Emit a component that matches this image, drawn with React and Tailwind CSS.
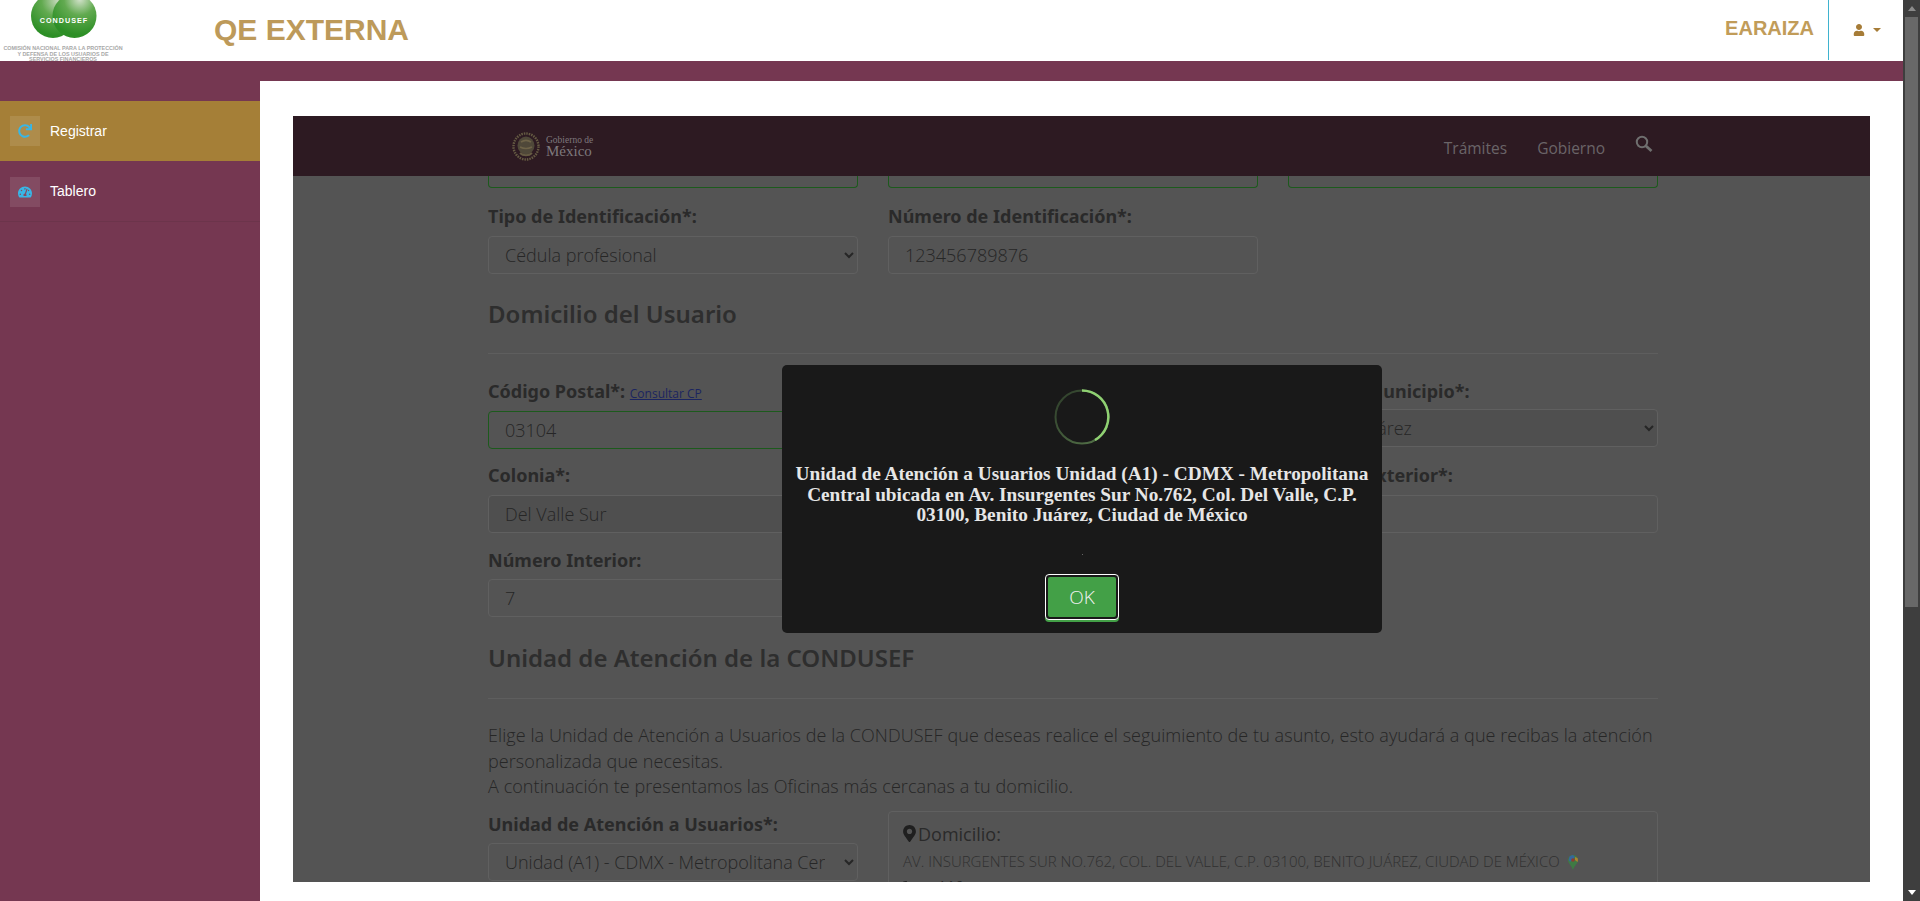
import React from 'react';
import { FaRedo, FaTachometerAlt, FaUser, FaMapMarkerAlt, FaPhoneAlt } from 'react-icons/fa';

const LABEL = "block font-['Noto_Sans',sans-serif] font-bold text-[18px] leading-[24px] text-[#2a2a2a]";
const FIELD = "block w-full h-[38px] rounded-[4px] border px-[16px] font-['Open_Sans',sans-serif] font-light text-[18px] text-[#262626] outline-none";
const H2 = "font-['Noto_Sans',sans-serif] font-semibold text-[24px] leading-[32px] text-[#2e2e2e]";
const BODY = "font-['Open_Sans',sans-serif] font-light text-[18px] leading-[25.5px] tracking-[0.07px] text-[#262626]";

const Field = ({ value = '', green, disabled }) => (
  <input
    readOnly
    value={value}
    className={`${FIELD} ${green ? 'border-[#1c5a1c]' : 'border-[#606060]'} ${disabled ? 'bg-[#4f4f4f]' : 'bg-[#545454]'}`}
  />
);

const Select = ({ value, disabled }) => (
  <select
    value={value}
    onChange={() => {}}
    className={`${FIELD} appearance-auto border-[#606060] pl-[12px] pr-[16px] ${disabled ? 'bg-[#4f4f4f]' : 'bg-[#545454]'}`}
  >
    <option>{value}</option>
  </select>
);

const CondusefLogo = () => (
  <svg width="130" height="61" viewBox="0 0 130 61" className="block">
    <defs>
      <radialGradient id="leftBall" cx="60%" cy="15%" r="80%">
        <stop offset="0%" stopColor="#c5d8bb" />
        <stop offset="45%" stopColor="#62aa50" />
        <stop offset="100%" stopColor="#2d8f26" />
      </radialGradient>
      <radialGradient id="rightBall" cx="62%" cy="12%" r="80%">
        <stop offset="0%" stopColor="#d3e2cb" />
        <stop offset="45%" stopColor="#62aa50" />
        <stop offset="100%" stopColor="#2d8f26" />
      </radialGradient>
    </defs>
    <circle cx="53" cy="16" r="22" fill="url(#leftBall)" />
    <circle cx="74.5" cy="16" r="22" fill="url(#rightBall)" />
    <text x="64" y="23" textAnchor="middle" fill="#ffffff" fontFamily="Liberation Sans" fontWeight="700" fontSize="7.2" letterSpacing="1">CONDUSEF</text>
    <g fill="#a8a8a8" fontFamily="Liberation Sans" fontSize="5.4" textAnchor="middle" fontWeight="700">
      <text x="63" y="49.5">COMISIÓN NACIONAL PARA LA PROTECCIÓN</text>
      <text x="63" y="55.5">Y DEFENSA DE LOS USUARIOS DE</text>
      <text x="63" y="61">SERVICIOS FINANCIEROS</text>
    </g>
  </svg>
);

const GobLogo = () => (
  <div className="flex items-center gap-[6px]">
    <svg width="28" height="29" viewBox="0 0 28 29">
      <ellipse cx="14" cy="14.5" rx="12.5" ry="13" fill="none" stroke="#655b43" strokeWidth="2.4" strokeDasharray="1.5 1" />
      <ellipse cx="14" cy="13.5" rx="8.5" ry="9" fill="#4f4839" />
      <path d="M9 10c3-2 7-2 10 0M8 15c4 2 8 2 12 0" fill="none" stroke="#6e6348" strokeWidth="1.6" />
      <path d="M8 21c3 3 9 3 12 0" fill="none" stroke="#655b43" strokeWidth="2" />
    </svg>
    <div className="font-['Liberation_Serif',serif] text-[#7d787c]">
      <div className="text-[9.5px] leading-[10px]">Gobierno de</div>
      <div className="text-[15px] leading-[12px]">México</div>
    </div>
  </div>
);

const GoogleMapsPin = () => (
  <svg width="10" height="15" viewBox="0 0 10 15" className="inline-block ml-[8px] align-[-3px]">
    <path d="M5 0a5 5 0 0 1 5 5c0 3.4-3.600 5.600-5 10C3.600 10.600 0 8.400 0 5a5 5 0 0 1 5-5z" fill="#3f7a44" />
    <path d="M1.500 1.500A5 5 0 0 1 5 0l2 2-5 5-1.300-2z" fill="#35679c" />
    <path d="M7 2l2.500 1a5 5 0 0 1 0 4L7 5z" fill="#a9852f" />
    <circle cx="5" cy="5" r="1.800" fill="#8f3a2f" />
  </svg>
);

const SideItem = ({ icon, label, active }) => (
  <div className={`flex items-center gap-[10px] pl-[10px] ${active ? 'h-[60px] bg-[#a57f37]' : 'h-[61px] border-b border-[#6c344b] pt-[1px]'}`}>
    <div className="flex w-[30px] h-[30px] items-center justify-center bg-white/10 text-[#38b6e6] text-[14px]">{icon}</div>
    <span className="font-['Liberation_Sans',sans-serif] text-[14px] text-white">{label}</span>
  </div>
);

const Scrollbar = () => (
  <div className="flex w-[17px] shrink-0 flex-col items-center bg-[#3e3e3e]">
    <div className="flex h-[17px] w-full items-center justify-center">
      <div className="h-0 w-0 border-x-[4px] border-b-[5px] border-x-transparent border-b-[#8a8a8a]" />
    </div>
    <div className="h-[590px] w-[13px] bg-[#686868]" />
    <div className="flex-1" />
    <div className="flex h-[17px] w-full items-center justify-center">
      <div className="h-0 w-0 border-x-[4px] border-t-[5px] border-x-transparent border-t-white" />
    </div>
  </div>
);

const Modal = () => (
  <div className="absolute left-[489px] top-[249px] flex h-[268px] w-[600px] flex-col items-center rounded-[5px] bg-[#191919] pt-[24px]">
    <svg width="56" height="56" viewBox="0 0 56 56" className="block">
      <defs>
        <linearGradient id="spinDim" x1="1" y1="1" x2="0" y2="0">
          <stop offset="0%" stopColor="#56764a" />
          <stop offset="100%" stopColor="#2e3d2a" />
        </linearGradient>
      </defs>
      <circle cx="28" cy="28" r="26.500" fill="none" stroke="url(#spinDim)" strokeWidth="2" />
      <path d="M28 1.500A26.500 26.500 0 0 1 41 51" fill="none" stroke="#8fd072" strokeWidth="2.500" />
    </svg>
    <p className="mt-[19px] w-[590px] text-center font-['Liberation_Serif',serif] font-bold text-[19.3px] leading-[20.700px] text-[#e6e6e6]">
      Unidad de Atención a Usuarios Unidad (A1) - CDMX - Metropolitana Central ubicada en Av. Insurgentes Sur No.762, Col. Del Valle, C.P. 03100, Benito Juárez, Ciudad de México
    </p>
    <div className="mt-[28px] h-px w-px bg-[#666666]" />
    <button className="mt-[19px] h-[46px] w-[74px] rounded-[4px] border border-white bg-[#191919] p-[2px] shadow-[0_2px_0_#43a047]">
      <span className="flex h-full w-full items-center justify-center rounded-[2px] bg-[#43a047] font-['Open_Sans',sans-serif] font-light text-[19px] text-[#f2f2f2]">OK</span>
    </button>
  </div>
);

export default function App() {
  return (
    <div className="flex h-[901px] w-full overflow-hidden bg-white">
      <div className="flex min-w-0 flex-1 flex-col">
        <header className="flex h-[61px] shrink-0 items-center bg-white">
          <div className="h-[61px] w-[214px] shrink-0 overflow-hidden">
            <CondusefLogo />
          </div>
          <h1 className="font-['Liberation_Sans',sans-serif] font-bold text-[30px] leading-[61px] text-[#bd9a5a] mb-[2px]">QE EXTERNA</h1>
          <div className="flex-1" />
          <span className="font-['Liberation_Sans',sans-serif] font-bold text-[20px] text-[#c19c59] mb-[5px] mr-[14px]">EARAIZA</span>
          <div className="flex h-[60px] w-[75px] items-center self-start border-l border-[#3fb3cf] pl-[24px] text-[#a67c37]">
            <FaUser className="text-[12px]" />
            <div className="ml-[8px] h-0 w-0 border-x-[4px] border-t-[4px] border-x-transparent border-t-[#a67c37]" />
          </div>
        </header>

        <div className="flex flex-1 flex-col bg-[#753751]">
          <div className="flex flex-1">
            <aside className="w-[260px] shrink-0 pt-[40px]">
              <SideItem active icon={<FaRedo />} label="Registrar" />
              <SideItem icon={<FaTachometerAlt />} label="Tablero" />
            </aside>

            <div className="flex flex-1 flex-col">
              <div className="h-[20px] shrink-0" />
              <main className="flex-1 bg-white pl-[33px] pt-[35px]">
                <div className="relative h-[766px] w-[1577px] overflow-hidden bg-[#545454]">
                  <nav className="flex h-[60px] items-center bg-[#2d1a22] pl-[219px] pr-[218px]">
                    <GobLogo />
                    <div className="flex-1" />
                    <div className="flex items-center gap-[30px] font-['Open_Sans',sans-serif] text-[15.5px] text-[#6a6468] mt-[5px]">
                      <span>Trámites</span>
                      <span>Gobierno</span>
                    </div>
                    <svg width="18" height="18" viewBox="0 0 18 18" className="ml-[30px] mb-[5px] mr-[-1px]">
                      <circle cx="7" cy="7" r="5.200" fill="none" stroke="#6f6f6f" strokeWidth="2" />
                      <path d="M11 11l5.500 5" stroke="#6f6f6f" strokeWidth="2.800" />
                    </svg>
                  </nav>

                  <div className="w-[1170px] ml-[195px]">
                    <div className="grid grid-cols-3 gap-x-[30px]">
                      <div className="h-[12px] rounded-b-[4px] border-x border-b border-[#1c5a1c]" />
                      <div className="h-[12px] rounded-b-[4px] border-x border-b border-[#1c5a1c]" />
                      <div className="h-[12px] rounded-b-[4px] border-x border-b border-[#1c5a1c]" />
                    </div>

                    <div className="mt-[16px] grid grid-cols-3 gap-x-[30px]">
                      <div>
                        <label className={LABEL}>Tipo de Identificación*:</label>
                        <div className="mt-[8px]"><Select value="Cédula profesional" /></div>
                      </div>
                      <div>
                        <label className={LABEL}>Número de Identificación*:</label>
                        <div className="mt-[8px]"><Field value="123456789876" /></div>
                      </div>
                    </div>

                    <h2 className={`${H2} mt-[24px]`}>Domicilio del Usuario</h2>
                    <hr className="mt-[23px] border-t border-[#5e5e5e]" />

                    <div className="mt-[25px] grid grid-cols-3 gap-x-[30px]">
                      <div>
                        <label className={LABEL}>
                          Código Postal*: <a className="font-['Open_Sans',sans-serif] font-normal text-[12px] text-[#1b2560] underline">Consultar CP</a>
                        </label>
                        <div className="mt-[5px]"><Field value="03104" green /></div>
                      </div>
                      <div />
                      <div>
                        <label className={LABEL}>Alcaldía/Municipio*:</label>
                        <div className="mt-[6px]"><Select value="Benito Juárez" disabled /></div>
                      </div>
                    </div>

                    <div className="mt-[14px] grid grid-cols-3 gap-x-[30px]">
                      <div>
                        <label className={LABEL}>Colonia*:</label>
                        <div className="mt-[8px]"><Field value="Del Valle Sur" disabled /></div>
                      </div>
                      <div />
                      <div>
                        <label className={LABEL}>Número Exterior*:</label>
                        <div className="mt-[8px]"><Field /></div>
                      </div>
                    </div>

                    <div className="mt-[15px] grid grid-cols-3 gap-x-[30px]">
                      <div>
                        <label className={LABEL}>Número Interior:</label>
                        <div className="mt-[7px]"><Field value="7" /></div>
                      </div>
                    </div>

                    <h2 className={`${H2} mt-[25px]`}>Unidad de Atención de la CONDUSEF</h2>
                    <hr className="mt-[24px] border-t border-[#5e5e5e]" />

                    <p className={`${BODY} mt-[24px]`}>
                      Elige la Unidad de Atención a Usuarios de la CONDUSEF que deseas realice el seguimiento de tu asunto, esto ayudará a que recibas la atención personalizada que necesitas.
                      <br />
                      A continuación te presentamos las Oficinas más cercanas a tu domicilio.
                    </p>

                    <div className="mt-[11px] grid grid-cols-3 gap-x-[30px]">
                      <div className="pt-[1px]">
                        <label className={LABEL}>Unidad de Atención a Usuarios*:</label>
                        <div className="mt-[7px]"><Select value="Unidad (A1) - CDMX - Metropolitana Central" /></div>
                      </div>
                      <div className="col-span-2 h-[120px] rounded-[4px] border border-[#606060] px-[14px] pt-[9px]">
                        <div className="ml-[-2px] flex items-center font-['Open_Sans',sans-serif] text-[18px] leading-[26px] text-[#2a2a2a]">
                          <FaMapMarkerAlt className="text-[17px] text-[#1f1f1f]" />
                          <span>Domicilio:</span>
                        </div>
                        <div className="mt-[4px] font-['Open_Sans',sans-serif] font-light text-[15px] leading-[20px] text-[#303030]">
                          AV. INSURGENTES SUR NO.762, COL. DEL VALLE, C.P. 03100, BENITO JUÁREZ, CIUDAD DE MÉXICO
                          <GoogleMapsPin />
                        </div>
                        <div className="mt-[4px] flex items-center gap-[4px] font-['Open_Sans',sans-serif] text-[18px] leading-[26px] text-[#2a2a2a]">
                          <FaPhoneAlt className="text-[13px] text-[#1f1f1f]" />
                          <span>Teléfono:</span>
                        </div>
                      </div>
                    </div>
                  </div>

                  <Modal />
                </div>
              </main>
            </div>
          </div>
        </div>
      </div>
      <Scrollbar />
    </div>
  );
}
